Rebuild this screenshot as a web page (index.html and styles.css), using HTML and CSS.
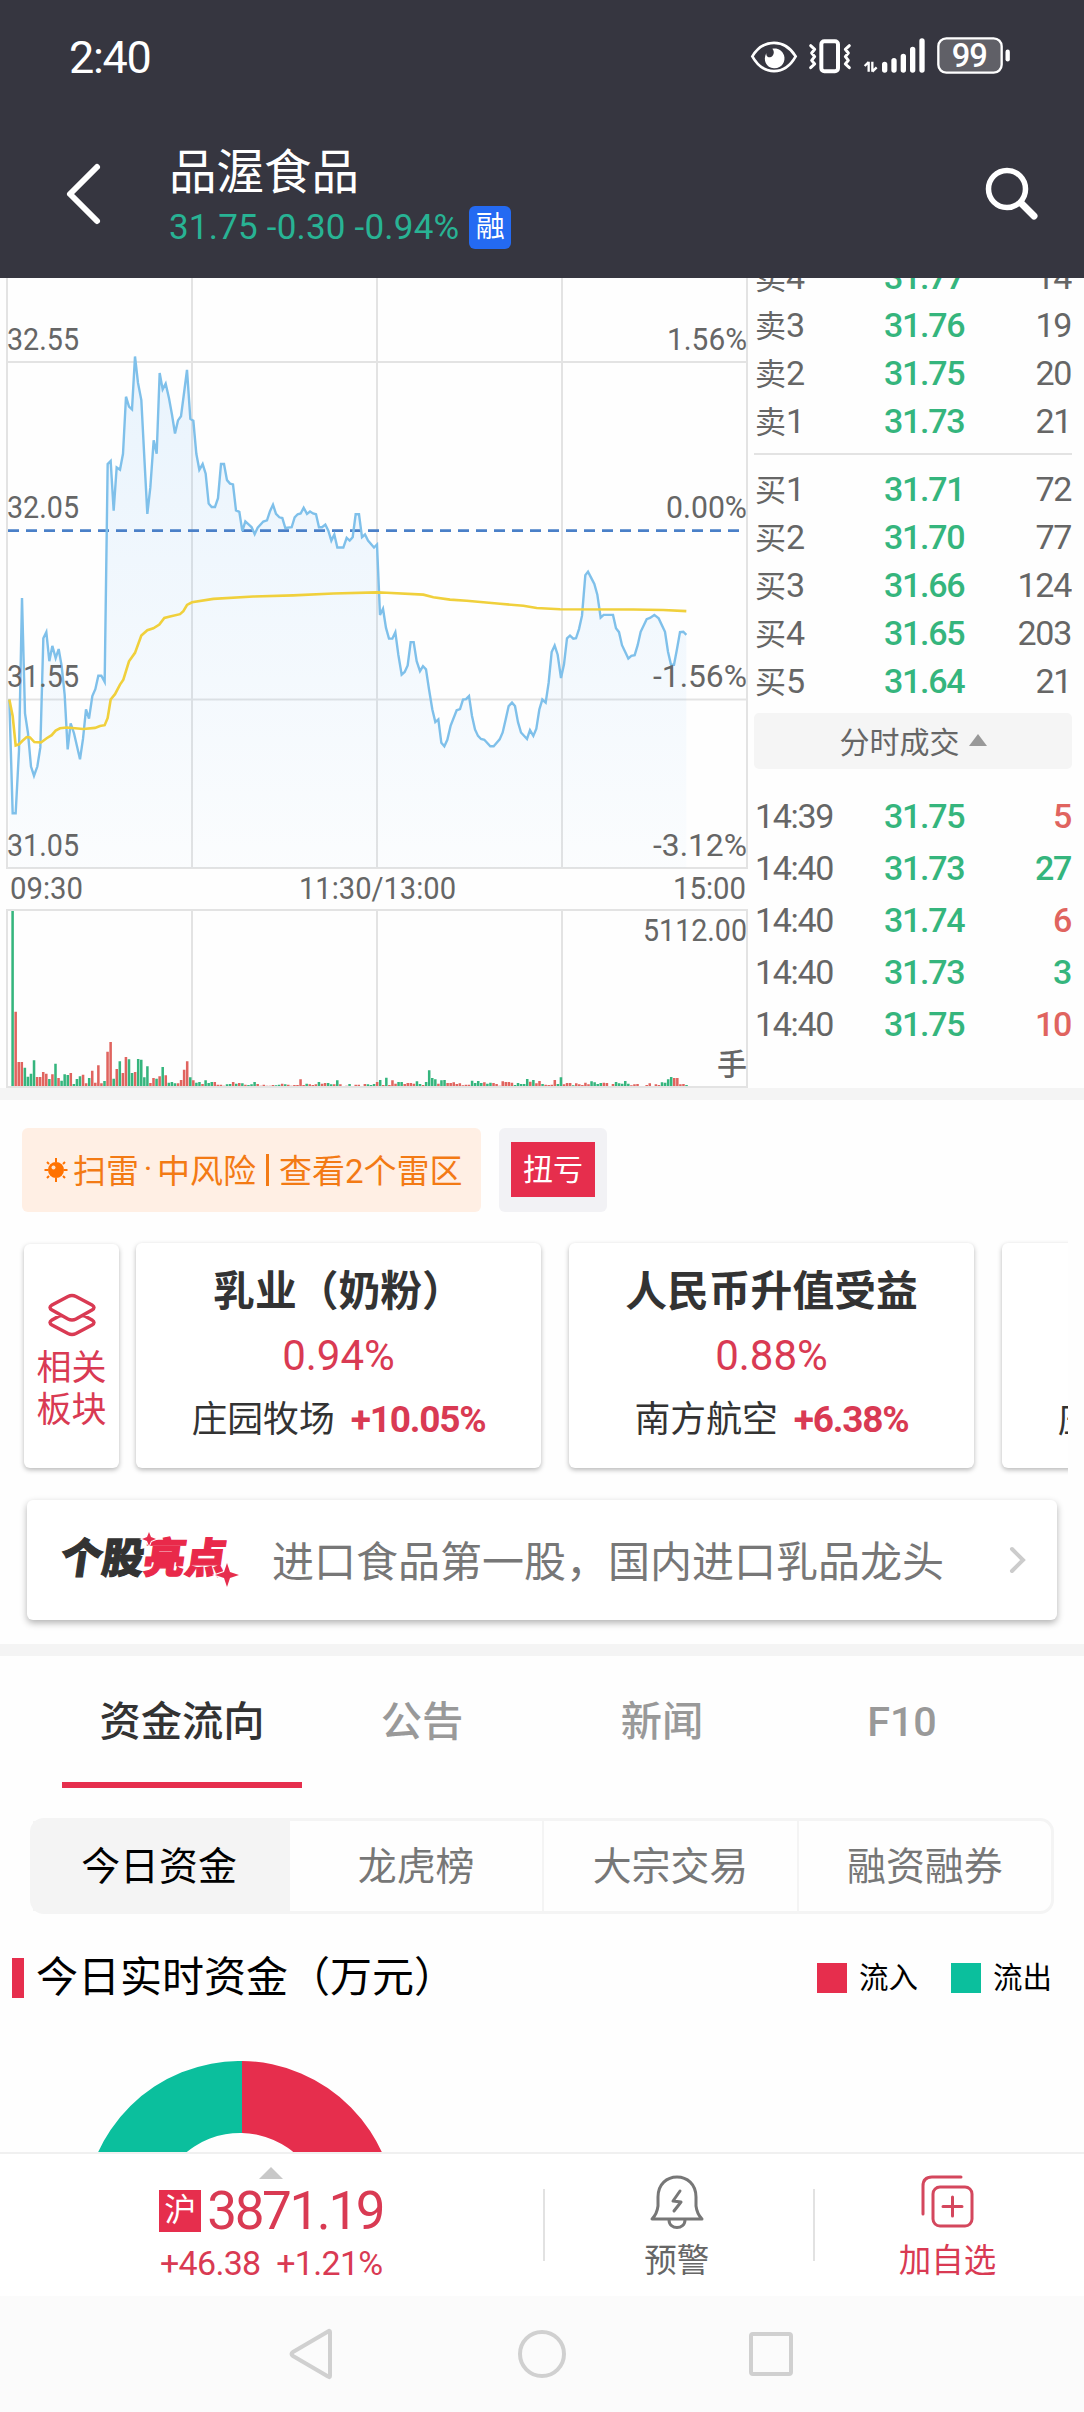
FILE: index.html
```html
<!DOCTYPE html>
<html lang="zh-CN">
<head>
    <meta charset="UTF-8">
    <meta name="viewport" content="width=device-width, initial-scale=1.0">
    <title>品渥食品</title>
    <link rel="stylesheet" href="styles.css">
</head>
<body>
    <header class="header">
        <div class="status-bar">
            <span class="clock">2:40</span>
            <svg class="status-icons" viewBox="0 0 870 210" width="290" height="70" fill="none" stroke="#fff">
                <path d="M37 109C70 55 134 55 167 109C134 168 70 168 37 109Z" stroke-width="8"/>
                <path d="M97 86C106 96 100 110 90 112C82 113 78 105 79 99C68 120 78 143 102 145C126 146 138 124 132 106C126 89 112 83 97 86Z" fill="#fff" stroke="none"/>
                <rect x="244" y="64" width="50" height="90" rx="9" stroke-width="12"/>
                <path d="M212 77l12 11l-9 11l9 11l-9 11l9 11l-12 11M328 77l-12 11l9 11l-9 11l9 11l-9 11l12 11" stroke-width="9" stroke-linecap="round" stroke-linejoin="round"/>
                <path d="M386 125V155M374 138L386 126M397 125V155M397 155L410 142" stroke-width="7"/>
                <path d="M434 133V150M462 122V150M490 109V150M518 88V150M546 63V150" stroke-width="16" stroke-linecap="round"/>
                <rect x="595" y="55" width="190" height="103" rx="24" fill="#606067" stroke-width="7"/>
                <path d="M803 95V118" stroke-width="13" stroke-linecap="round"/>
                <text x="688" y="141" class="battery-text">99</text>
            </svg>
        </div>
        <div class="title-bar">
            <svg class="back" viewBox="0 0 40 64" width="40" height="64"><path d="M34 5L7 32L34 59"/></svg>
            <div class="stock">
                <h1>品渥食品</h1>
                <div class="quote-line"><span>31.75 -0.30 -0.94%</span><i class="margin-tag">融</i></div>
            </div>
            <svg class="search" viewBox="0 0 56 56" width="56" height="56"><circle cx="24" cy="24" r="18.5"/><path d="M38 38L51 51" stroke-width="7"/></svg>
        </div>
    </header>

    <main class="content">
        <section class="market">
            <svg class="chart" viewBox="0 278 750 810" width="750" height="810">
                <defs>
                    <linearGradient id="area" x1="0" y1="0" x2="0" y2="1">
                        <stop offset="0" stop-color="#5eaef5" stop-opacity=".13"/>
                        <stop offset=".75" stop-color="#5eaef5" stop-opacity=".05"/>
                        <stop offset="1" stop-color="#5eaef5" stop-opacity=".02"/>
                    </linearGradient>
                </defs>
                <path class="grid" d="M7 278V868M192 278V868M377 278V868M562 278V868M747 278V868M7 362H747M7 699.5H747M6 868H748M6 910H748M7 910V1087M192 910V1087M377 910V1087M562 910V1087M747 910V1087M6 1087H748"/>
                <!-- price and average lines -->
                <svg id="lines" x="0" y="278" width="750" height="590" viewBox="0 21 2250 1541" preserveAspectRatio="none">
                    <path id="priceArea" fill="url(#area)"/>
                    <path class="prev-close" d="M24 681H2238"/>
                    <path id="priceLine" class="price-line"/>
                    <path class="avg-line" d="M28 1122L38 1165L47 1242L57 1239L66 1231L80 1220L90 1221L103 1233L123 1234L140 1223L155 1215L167 1203L180 1197L200 1195L250 1199L285 1196L300 1191L314 1189L323 1170L332 1122L345 1108L360 1083L370 1070L387 1022L405 1000L424 955L442 941L460 936L478 926L493 909L510 905L540 899L550 891L561 875L576 868L640 859L760 853L880 850L1000 845L1131 842L1160 843L1270 848L1300 855L1350 861L1400 864L1500 872L1570 877L1610 883L1680 886L1900 887L1990 888L2059 891"/>
                </svg>
                <!-- volume bars -->
                <svg x="0" y="910" width="750" height="178" viewBox="0 150 2250 534" preserveAspectRatio="none">
                    <path id="volUp" fill="#e0645f"/>
                    <path id="volDown" fill="#35b57d"/>
                </svg>
                <g class="axis">
                    <text x="7" y="350" textLength="72" lengthAdjust="spacingAndGlyphs">32.55</text>
                    <text x="7" y="518" textLength="72" lengthAdjust="spacingAndGlyphs">32.05</text>
                    <text x="7" y="687" textLength="72" lengthAdjust="spacingAndGlyphs">31.55</text>
                    <text x="7" y="856" textLength="72" lengthAdjust="spacingAndGlyphs">31.05</text>
                    <text x="667" y="350" textLength="80" lengthAdjust="spacingAndGlyphs">1.56%</text>
                    <text x="666" y="518" textLength="81" lengthAdjust="spacingAndGlyphs">0.00%</text>
                    <text x="653" y="687" textLength="94" lengthAdjust="spacingAndGlyphs">-1.56%</text>
                    <text x="653" y="856" textLength="94" lengthAdjust="spacingAndGlyphs">-3.12%</text>
                    <text x="10" y="899" textLength="73" lengthAdjust="spacingAndGlyphs">09:30</text>
                    <text x="299" y="899" textLength="157" lengthAdjust="spacingAndGlyphs">11:30/13:00</text>
                    <text x="673" y="899" textLength="73" lengthAdjust="spacingAndGlyphs">15:00</text>
                    <text x="643" y="941" textLength="104" lengthAdjust="spacingAndGlyphs">5112.00</text>
                    <text x="717" y="1075" class="cn">手</text>
                </g>
            </svg>
            <div class="book">
                <div class="orders sells">
                    <div class="row"><span>卖<b>4</b></span><em>31.77</em><b>14</b></div>
                    <div class="row"><span>卖<b>3</b></span><em>31.76</em><b>19</b></div>
                    <div class="row"><span>卖<b>2</b></span><em>31.75</em><b>20</b></div>
                    <div class="row"><span>卖<b>1</b></span><em>31.73</em><b>21</b></div>
                </div>
                <div class="orders buys">
                    <div class="row"><span>买<b>1</b></span><em>31.71</em><b>72</b></div>
                    <div class="row"><span>买<b>2</b></span><em>31.70</em><b>77</b></div>
                    <div class="row"><span>买<b>3</b></span><em>31.66</em><b>124</b></div>
                    <div class="row"><span>买<b>4</b></span><em>31.65</em><b>203</b></div>
                    <div class="row"><span>买<b>5</b></span><em>31.64</em><b>21</b></div>
                </div>
                <div class="ticks-title">分时成交<i class="tri"></i></div>
                <div class="orders ticks">
                    <div class="row"><b>14:39</b><em>31.75</em><b class="up">5</b></div>
                    <div class="row"><b>14:40</b><em>31.73</em><b class="down">27</b></div>
                    <div class="row"><b>14:40</b><em>31.74</em><b class="up">6</b></div>
                    <div class="row"><b>14:40</b><em>31.73</em><b class="down">3</b></div>
                    <div class="row"><b>14:40</b><em>31.75</em><b class="up">10</b></div>
                </div>
            </div>
        </section>

        <section class="tags">
            <div class="risk">
                <svg viewBox="0 0 24 26" width="24" height="26">
                    <circle cx="12" cy="13" r="8" fill="#ff7200"/>
                    <path d="M12 1V5M12 21V25M0.5 13H4M20 13H23.5M3 5L5 7M21 5L19 7M3 21L5 19M21 21L19 19" stroke="#ff7200" stroke-width="2"/>
                    <circle cx="9.5" cy="10.5" r="2" fill="#ffe3cc"/>
                </svg>
                <span>扫雷</span><span class="dot">·</span><span>中风险</span><span class="bar"></span><span>查看2个雷区</span>
            </div>
            <div class="turn"><span>扭亏</span></div>
        </section>

        <section class="sectors">
            <div class="related">
                <svg viewBox="0 0 50 44" width="50" height="44"><path d="M21 3.5Q25 1.500 29 3.500L45 12Q49 14.500 45 17L29 26Q25 28 21 26L5 17Q1 14.500 5 12ZM14 22L5 27Q1 29.500 5 32L21 40.500Q25 42.500 29 40.500L45 32Q49 29.500 45 27L36 22"/></svg>
                <span>相关<br>板块</span>
            </div>
            <div class="sector-list">
                <div class="sector">
                    <h3>乳业（奶粉）</h3>
                    <p class="change">0.94%</p>
                    <p class="leader">庄园牧场<b>+10.05%</b></p>
                </div>
                <div class="sector">
                    <h3>人民币升值受益</h3>
                    <p class="change">0.88%</p>
                    <p class="leader">南方航空<b>+6.38%</b></p>
                </div>
                <div class="sector">
                    <h3></h3>
                    <p class="change"></p>
                    <p class="leader">庄园牧场<b>+10.05%</b></p>
                </div>
            </div>
        </section>

        <section class="highlight">
            <div class="logo">
                <span>个股</span><span class="red">亮点</span>
                <svg viewBox="0 0 110 64" width="110" height="64"><path d="M11 2L13 7L18 9L13 11L11 16L9 11L4 9L9 7Z"/><path d="M89 33L92 42L101 45L92 48L89 57L86 48L77 45L86 42Z"/></svg>
            </div>
            <p>进口食品第一股，国内进口乳品龙头</p>
            <svg class="more" viewBox="0 0 18 28" width="18" height="28"><path d="M3 3L14 14L3 25"/></svg>
        </section>

        <nav class="tabs">
            <a class="active">资金流向</a>
            <a>公告</a>
            <a>新闻</a>
            <a>F10</a>
        </nav>

        <div class="segment">
            <a class="active">今日资金</a>
            <a>龙虎榜</a>
            <a>大宗交易</a>
            <a>融资融券</a>
        </div>

        <section class="funds">
            <div class="funds-title">
                <h2>今日实时资金（万元）</h2>
                <span class="legend in">流入</span>
                <span class="legend out">流出</span>
            </div>
            <svg class="donut" viewBox="0 0 312 92" width="312" height="92">
                <path fill="#0bbf9d" d="M158 0A156 156 0 0 0 0 156H72A84 84 0 0 1 158 72Z"/>
                <path fill="#e62e4d" d="M158 0A156 156 0 0 1 312 156H240A84 84 0 0 0 158 72Z"/>
            </svg>
        </section>
    </main>

    <footer class="bottom-bar">
        <div class="index">
            <i class="tri"></i>
            <div class="index-value"><span>沪</span><b>3871.19</b></div>
            <div class="index-change">+46.38 +1.21%</div>
        </div>
        <div class="action">
            <svg viewBox="0 0 56 56" width="56" height="56"><path d="M3 45H53Q48 40 47 32V23C47 10 38 3 28 3S9 10 9 23V32Q8 40 3 45ZM20 46C20 56 36 56 36 46M31 17L24 27L32 28L25 37"/></svg>
            <span>预警</span>
        </div>
        <div class="action add">
            <svg viewBox="0 0 56 56" width="56" height="56"><rect x="13" y="13" width="39" height="39" rx="7"/><path d="M41 3H12Q3 3 3 12V40M32.500 23V42M23 32.500H42"/></svg>
            <span>加自选</span>
        </div>
    </footer>

    <div class="system-nav">
        <svg viewBox="0 0 48 52" width="48" height="52"><path d="M42 4V48Q42 50 40 48.500L5 28Q2 26 5 24L40 3.500Q42 2 42 4Z"/></svg>
        <svg viewBox="0 0 50 50" width="50" height="50"><circle cx="25" cy="25" r="22"/></svg>
        <svg viewBox="0 0 48 48" width="48" height="48"><rect x="4" y="4" width="40" height="40" rx="2"/></svg>
    </div>

    <script>
        const price = [
            28,1122, 38,1419, 47,1419, 57,1255, 66,857, 75,1158, 84,1210, 93,1297, 102,1321, 112,1297, 121,1247, 130,962, 139,946, 148,1022,
            157,982, 167,1014, 176,990, 185,1035, 194,1110, 203,1252, 212,1184, 222,1210, 240,1278, 249,1225, 258,1148, 267,1172, 277,1113,
            286,1095, 295,1060, 304,1060, 314,1076, 323,507, 332,499, 341,629, 350,516, 360,522, 369,480, 378,331, 387,357, 396,364, 405,226,
            414,295, 424,340, 433,490, 442,637, 451,568, 461,445, 470,480, 479,269, 488,312, 497,297, 507,335, 516,378, 525,427, 534,393,
            543,382, 552,322, 561,261, 571,389, 580,394, 589,480, 598,522, 608,507, 617,532, 626,610, 635,619, 645,619, 654,596, 663,507,
            672,507, 681,549, 690,558, 699,560, 708,628, 718,632, 727,682, 736,657, 745,664, 755,672, 764,690, 773,673, 790,657, 801,654,
            810,630, 819,613, 828,637, 838,646, 847,648, 856,674, 875,672, 884,646, 893,638, 902,636, 911,621, 921,637, 930,631, 939,636,
            948,638, 957,672, 966,672, 976,665, 985,681, 994,707, 1003,691, 1012,725, 1030,725, 1040,700, 1049,707, 1058,698, 1067,638,
            1077,638, 1086,698, 1095,691, 1104,707, 1122,725, 1131,717, 1140,901, 1149,885, 1158,935, 1167,963, 1177,963, 1186,946,
            1195,1005, 1205,1057, 1214,1050, 1223,1033, 1232,972, 1241,972, 1250,1022, 1260,1048, 1269,1035, 1278,1043, 1287,1095,
            1297,1148, 1306,1181, 1315,1174, 1324,1235, 1333,1244, 1342,1227, 1352,1190, 1370,1150, 1380,1147, 1389,1122, 1398,1121,
            1407,1113, 1416,1165, 1425,1200, 1434,1217, 1443,1225, 1453,1227, 1471,1244, 1481,1244, 1499,1226, 1508,1208, 1517,1174,
            1526,1139, 1536,1130, 1545,1139, 1554,1181, 1563,1208, 1581,1225, 1590,1202, 1600,1217, 1609,1198, 1618,1148, 1627,1122,
            1637,1130, 1646,1078, 1655,998, 1664,981, 1673,1005, 1683,1066, 1692,1030, 1701,962, 1710,955, 1720,963, 1728,962, 1737,938,
            1746,903, 1756,797, 1764,788, 1774,805, 1783,820, 1792,848, 1802,908, 1811,901, 1839,901, 1848,936, 1857,946, 1866,980,
            1885,1015, 1894,1008, 1904,1006, 1913,980, 1922,945, 1940,912, 1950,909, 1963,901, 1976,910, 1995,945, 2004,997, 2013,1031,
            2022,1031, 2031,990, 2040,946, 2050,945, 2059,953
        ];
        // one bar a minute, negative = price fell
        const volume = [
            -525,223,72,72,-55,-28,-37,-77,27,27,42,37,-21,35,-67,24,-16,-35,-33,39,-6,-21,-29,34,8,-24,46,10,62,8,
            -15,103,132,-22,51,-74,39,87,-80,-39,42,-81,-79,-26,-59,9,24,-22,29,-57,32,-10,-12,-8,8,18,49,74,-26,17,
            -10,-12,6,-17,-9,-12,12,4,4,1,-5,-6,12,-7,9,-8,4,-3,-5,-12,6,1,4,1,1,3,-2,-4,7,-5,
            4,1,3,3,20,3,-7,5,3,5,-12,7,9,-9,-5,5,-17,5,0,1,-6,0,4,4,0,6,-5,-3,-6,12,
            -18,3,-25,3,17,7,-12,-12,6,9,9,7,-14,-6,3,-12,-47,-24,-20,7,-17,-18,9,9,11,6,8,2,4,4,
            -16,-9,-15,-9,11,-7,-10,9,6,1,14,12,12,10,-3,-9,-6,-6,-21,13,-18,8,15,-6,4,3,4,18,-6,-26,
            5,9,9,-2,8,5,3,10,5,-14,-11,-6,-9,10,9,0,6,-12,-8,-7,-15,-7,2,5,6,0,0,3,8,0,
            5,3,-11,-10,-20,-27,24,24,5,6,-3
        ];

        let line = '';
        for (let i = 0; i < price.length; i += 2) {
            line += (i ? 'L' : 'M') + price[i] + ' ' + price[i + 1];
        }
        document.getElementById('priceLine').setAttribute('d', line);
        document.getElementById('priceArea').setAttribute('d', line + 'V1562H28Z');

        let up = '', down = '';
        volume.forEach((v, i) => {
            const h = Math.abs(v);
            const bar = `M${(34 + i * 9.19).toFixed(1)} 678v-${h}h7.600v${h}z`;
            if (v > 0) up += bar;
            if (v < 0) down += bar;
        });
        document.getElementById('volUp').setAttribute('d', up);
        document.getElementById('volDown').setAttribute('d', down);
    </script>
</body>
</html>
```
FILE: styles.css
```css
* {
    box-sizing: border-box;
}
body {
    margin: 0;
    width: 1084px;
    height: 2412px;
    overflow: hidden;
    display: flex;
    flex-direction: column;
    background-color: #fefefe;
    color: #333;
    font-family: Roboto, "Noto Sans CJK SC", sans-serif;
}
h1, h2, h3, p {
    margin: 0;
    font-weight: 400;
}
i, em {
    font-style: normal;
}
svg {
    display: block;
    flex: none;
}

/* header */
.header {
    flex: none;
    height: 278px;
    background-color: #363640;
    color: #fff;
}
.status-bar {
    display: flex;
    justify-content: space-between;
    height: 90px;
    padding: 20px 54px 0 69px;
}
.clock {
    font-size: 45px;
    font-weight: 450;
    line-height: 76px;
    letter-spacing: -1.3px;
}
.battery-text {
    font-size: 98px;
    font-weight: 500;
    fill: #fff;
    stroke: none;
    text-anchor: middle;
    letter-spacing: -3px;
}
.title-bar {
    display: flex;
    padding: 50px 45px 0 63px;
}
.back {
    margin-top: 22px;
    fill: none;
    stroke: #fff;
    stroke-width: 6;
    stroke-linecap: round;
    stroke-linejoin: round;
}
.stock {
    flex: 1;
    margin-left: 66px;
}
h1 {
    height: 64px;
    font-size: 47.5px;
    line-height: 66px;
}
.quote-line {
    display: flex;
    align-items: center;
    height: 46px;
    color: #28b394;
    font-size: 35px;
    letter-spacing: 0.2px;
}
.margin-tag {
    width: 42px;
    height: 43px;
    margin-left: 10px;
    border-radius: 6px;
    background-color: #246af2;
    color: #fff;
    font-size: 29px;
    line-height: 43px;
    text-align: center;
}
.search {
    margin-top: 25px;
    fill: none;
    stroke: #fff;
    stroke-width: 5.5;
    stroke-linecap: round;
}

/* chart and order book */
.content {
    flex: 1;
    overflow: hidden;
}
.market {
    display: flex;
    height: 822px;
    border-bottom: 12px solid #f4f4f4;
}
.grid {
    stroke: #e3e3e3;
    stroke-width: 2;
}
.price-line, .avg-line, .prev-close {
    fill: none;
    vector-effect: non-scaling-stroke;
}
.price-line {
    stroke: #7fc0ea;
    stroke-width: 2.4;
}
.avg-line {
    stroke: #f0d03c;
    stroke-width: 2.6;
}
.prev-close {
    stroke: #4a80c8;
    stroke-width: 2.8;
    stroke-dasharray: 11 7;
}
.axis {
    font-size: 31px;
    font-weight: 450;
    fill: #666;
}
.axis .cn {
    font-size: 30px;
}
.book {
    width: 318px;
    margin-left: 4px;
    overflow: hidden;
}
.orders {
    color: #666;
}
.row {
    display: grid;
    grid-template-columns: 129px 1fr 90px;
    height: 48px;
    padding: 0 1px;
    line-height: 48px;
    font-size: 31px;
}
.row b, .row em {
    font-weight: 450;
    font-size: 34px;
    letter-spacing: -1.3px;
}
.row em {
    color: #35b57d;
    font-weight: 500;
}
.row > b:last-child {
    text-align: right;
}
.row .up {
    color: #e0645f;
    font-weight: 500;
}
.row .down {
    color: #35b57d;
    font-weight: 500;
}
.sells {
    height: 202px;
    margin-top: -25px;
    border-bottom: 2px solid #e3e3e3;
}
.buys {
    padding-top: 10px;
}
.ticks-title {
    display: flex;
    align-items: center;
    justify-content: center;
    height: 56px;
    margin-top: 8px;
    padding-bottom: 2px;
    border-radius: 5px;
    background-color: #f5f5f5;
    color: #666;
    font-size: 30px;
}
.tri {
    border: 9px solid transparent;
    border-top: 0;
    border-bottom: 12px solid #999;
    margin-left: 9px;
}
.ticks {
    padding-top: 21px;
}
.ticks .row {
    height: 52px;
    line-height: 52px;
}

/* tags */
.tags {
    display: flex;
    gap: 18px;
    padding: 28px 22px 0;
}
.risk {
    display: flex;
    align-items: center;
    width: 459px;
    height: 84px;
    padding: 0 0 3px 22px;
    border-radius: 6px;
    background-color: #ffefe4;
    color: #f37a14;
    font-size: 33px;
    white-space: nowrap;
}
.risk svg {
    margin: 3px 5px 0 0;
}
.dot {
    width: 18px;
    text-align: center;
}
.bar {
    width: 3px;
    height: 32px;
    margin: 3px 10px 0;
    background-color: #f37a14;
}
.turn {
    width: 108px;
    height: 84px;
    padding: 14px 12px;
    border-radius: 6px;
    background-color: #f2f2f5;
}
.turn span {
    display: block;
    height: 55px;
    background-color: #e62e4d;
    color: #fff;
    font-size: 30px;
    line-height: 55px;
    text-align: center;
}

/* related sectors */
.sectors {
    display: flex;
    gap: 5px;
    padding: 19px 16px 0 24px;
}
.related, .sector, .highlight {
    border-radius: 6px;
    background-color: #fff;
    box-shadow: 0 2px 5px rgba(0, 0, 0, 0.28);
}
.related {
    display: flex;
    flex-direction: column;
    align-items: center;
    width: 95px;
    height: 224px;
    margin-top: 13px;
    padding-top: 49px;
    color: #d93a53;
    font-size: 35px;
    line-height: 42px;
}
.related svg {
    margin-bottom: 11px;
    fill: none;
    stroke: #d93a53;
    stroke-width: 3.5;
}
.sector-list {
    display: flex;
    flex: 1;
    gap: 28px;
    height: 249px;
    padding: 12px 0 0 12px;
    overflow: hidden;
}
.sector {
    flex: none;
    width: 405px;
    height: 225px;
    padding-top: 18px;
    text-align: center;
}
.sector h3 {
    height: 62px;
    font-size: 41.8px;
    font-weight: 700;
    line-height: 62px;
}
.change {
    height: 66px;
    color: #d93a53;
    font-size: 42px;
    font-weight: 450;
    line-height: 66px;
}
.leader {
    font-size: 35.8px;
    line-height: 62px;
}
.leader b {
    margin-left: 16px;
    color: #d93a53;
    font-size: 37px;
    letter-spacing: -1.2px;
}

/* highlight */
.highlight {
    display: flex;
    align-items: center;
    width: 1030px;
    height: 120px;
    margin: 20px 0 24px 27px;
    padding: 0 30px 0 34px;
    box-shadow: 0 3px 7px rgba(0, 0, 0, 0.3);
}
.logo {
    position: relative;
    width: 211px;
    height: 64px;
    font-size: 41.5px;
    font-weight: 900;
    line-height: 61px;
    white-space: nowrap;
}
.logo span {
    display: inline-block;
    transform: skewX(-8deg);
    -webkit-text-stroke: 1.2px currentColor;
}
.logo .red {
    color: #e9294a;
}
.logo svg {
    position: absolute;
    left: 77px;
    top: 2px;
    fill: #e62e4d;
    stroke: #fff;
    stroke-width: 2;
    paint-order: stroke;
}
.highlight p {
    flex: 1;
    padding-bottom: 4px;
    color: #777;
    font-size: 42px;
    white-space: nowrap;
}
.more {
    fill: none;
    stroke: #ccc;
    stroke-width: 4;
    stroke-linecap: round;
}

/* tabs */
.tabs {
    display: flex;
    height: 150px;
    padding: 0 62px;
    border-top: 12px solid #f4f4f4;
}
.tabs a {
    width: 240px;
    height: 132px;
    border-bottom: 6px solid transparent;
    color: #999;
    font-size: 41.3px;
    font-weight: 500;
    line-height: 133px;
    text-align: center;
}
.tabs .active {
    border-color: #e62e4d;
    color: #333;
}
.segment {
    display: flex;
    width: 1024px;
    height: 96px;
    margin: 24px 0 0 30px;
    border: 3px solid #f4f4f4;
    border-radius: 14px;
}
.segment a {
    flex: 1;
    border-left: 2px solid #f4f4f4;
    color: #777;
    font-size: 38.9px;
    line-height: 91px;
    text-align: center;
}
.segment .active {
    flex: 0 0 255px;
    padding-right: 3px;
    border-left: 0;
    background-color: #f4f4f4;
    color: #000;
}

/* funds */
.funds-title {
    display: flex;
    align-items: center;
    height: 40px;
    margin-top: 44px;
    padding: 0 32px 0 12px;
}
.funds-title h2 {
    flex: 1;
    padding-left: 12px;
    border-left: 12px solid #e62e4d;
    color: #000;
    font-size: 42px;
    line-height: 40px;
}
.legend {
    display: flex;
    align-items: center;
    margin-left: 33px;
    color: #000;
    font-size: 29.5px;
    line-height: 36px;
}
.legend::before {
    content: "";
    width: 30px;
    height: 30px;
    margin-right: 12px;
    background-color: #e62e4d;
}
.legend.out::before {
    background-color: #0bbf9d;
}
.donut {
    margin: 63px 0 0 84px;
}

/* bottom bar */
.bottom-bar {
    display: flex;
    align-items: center;
    flex: none;
    height: 144px;
    border-top: 2px solid #f0f0f0;
    background-color: #fff;
    color: #d93a53;
}
.index {
    display: flex;
    flex-direction: column;
    align-items: center;
    width: 543px;
    height: 142px;
    padding-top: 13px;
}
.index .tri {
    margin: 0;
    border-width: 0 12px 12px;
    border-bottom-color: #c8c8c8;
}
.index-value {
    display: flex;
    align-items: center;
    height: 62px;
    padding-top: 2px;
}
.index-value span {
    width: 42px;
    height: 42px;
    margin-right: 6px;
    background-color: #e62e4d;
    color: #fff;
    font-size: 32px;
    line-height: 41px;
    text-align: center;
}
.index-value b {
    font-size: 53px;
    font-weight: 450;
    letter-spacing: -2.4px;
}
.index-change {
    font-size: 34px;
    font-weight: 450;
    line-height: 44px;
    letter-spacing: -0.7px;
    word-spacing: 8px;
}
.action {
    display: flex;
    flex-direction: column;
    align-items: center;
    width: 271px;
    height: 72px;
    padding-right: 4px;
    border-left: 2px solid #e2e2e2;
    color: #666;
    font-size: 32.5px;
    line-height: 44px;
}
.action svg {
    margin: -15px 0 9px;
    fill: none;
    stroke: #777;
    stroke-width: 3;
    stroke-linecap: round;
    stroke-linejoin: round;
}
.action.add {
    color: #d93a53;
}
.action.add svg {
    stroke: #d4475d;
}

.system-nav {
    display: flex;
    flex: none;
    align-items: center;
    justify-content: space-between;
    height: 116px;
    padding: 0 289px 0 288px;
    background-color: #fbfbfb;
}
.system-nav svg {
    fill: none;
    stroke: #d0d0d0;
    stroke-width: 4;
}
```
